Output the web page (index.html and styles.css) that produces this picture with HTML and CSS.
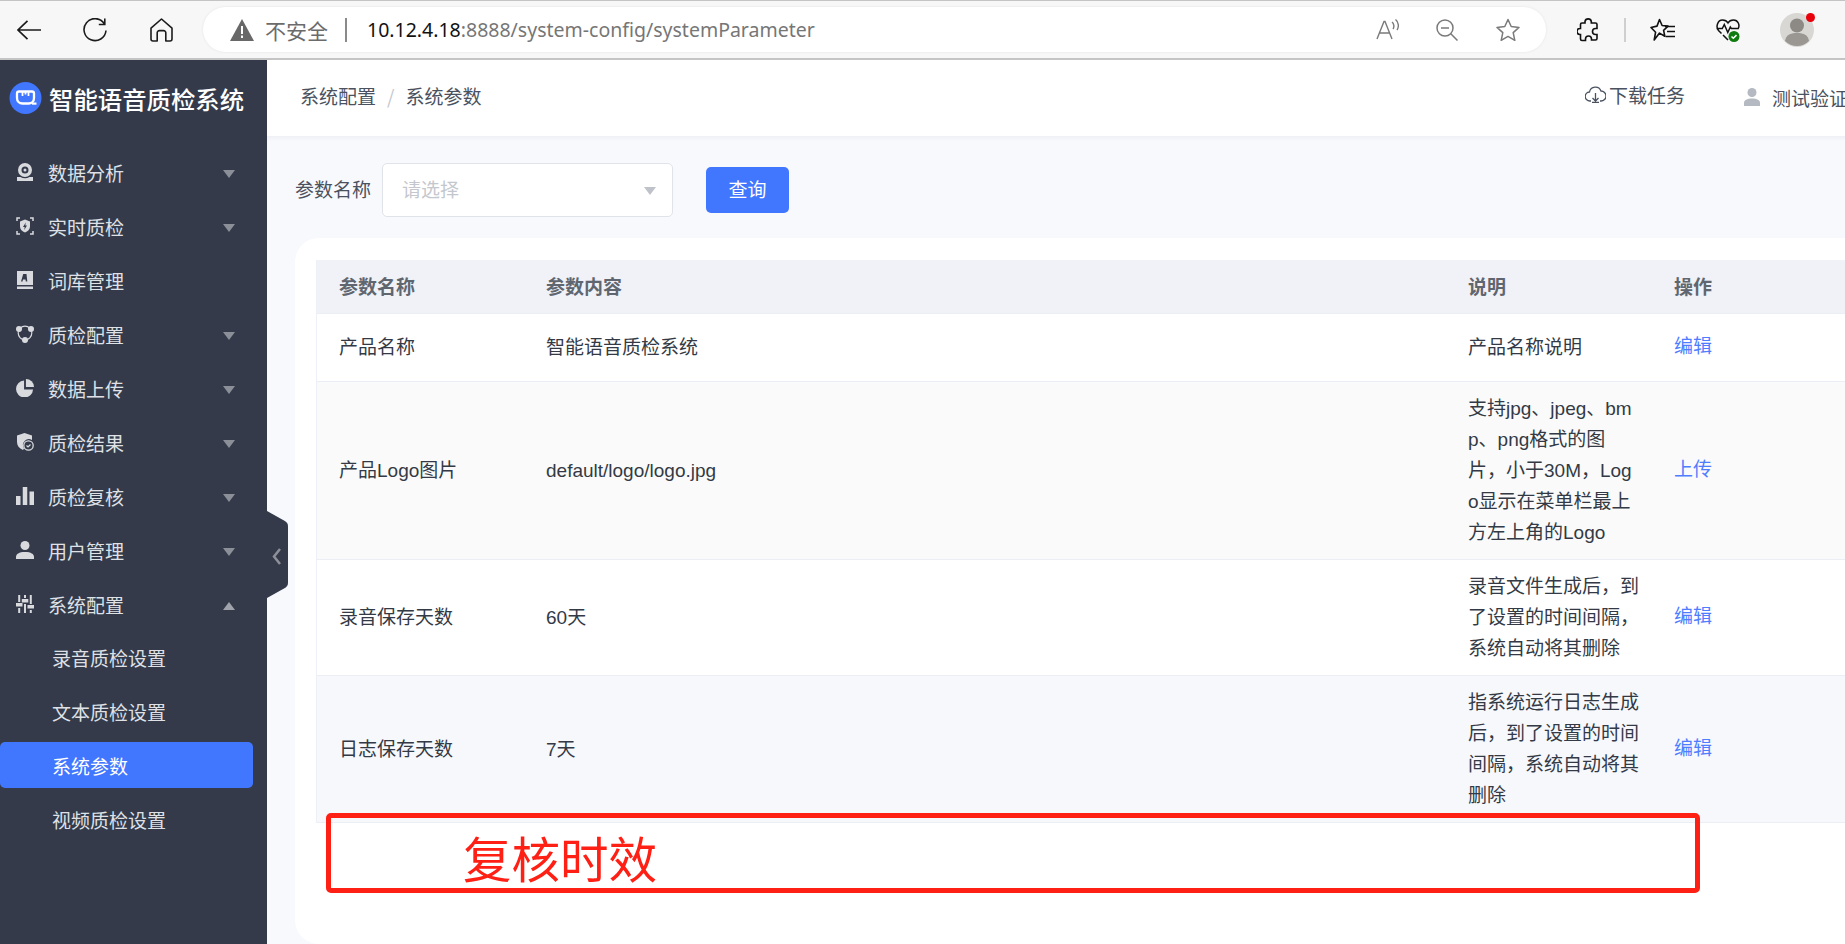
FILE: index.html
```html
<!DOCTYPE html>
<html lang="zh-CN">
<head>
<meta charset="utf-8">
<title>系统参数</title>
<link rel="stylesheet" href="styles.css">
</head>
<body>
<header class="browser">
  <svg class="b-back" width="24" height="20" viewBox="0 0 24 20"><path d="M24 10H1.5M10.5 .8 1 10l9.5 9.2" fill="none" stroke="#1c1c1c" stroke-width="1.7"/></svg>
  <svg class="b-reload" width="24" height="24" viewBox="0 0 24 24"><path d="M21.2 5.5A11 11 0 1 0 23 12.5M21.8 .5v6h-6" fill="none" stroke="#1c1c1c" stroke-width="1.6"/></svg>
  <svg class="b-home" width="23" height="24" viewBox="0 0 23 24"><path d="M1 10.2 11.5 1 22 10.2V21a2 2 0 0 1-2 2h-4.2v-8.2a2.2 2.2 0 0 0-2.2-2.2H9.4a2.2 2.2 0 0 0-2.2 2.2V23H3a2 2 0 0 1-2-2z" fill="none" stroke="#1c1c1c" stroke-width="1.6" stroke-linejoin="round"/></svg>
  <div class="pill">
    <svg class="warn" width="24" height="22" viewBox="0 0 24 22"><path d="M12 0 24 22H0z" fill="#686868"/><path d="M11 7h2v8h-2zM11 16.500h2v2.500h-2z" fill="#fff"/></svg>
    <span class="insecure">不安全</span>
    <span class="url-sep"></span>
    <span class="url"><b>10.12.4.18</b>:8888/system-config/systemParameter</span>
    <svg class="p-read" width="24" height="21" viewBox="0 0 24 21"><path d="M1 20 8 2.500h1L16 20M3.500 14h10M16 3c2 1.500 2.500 5 1 7M19.500 .5c3.200 2.500 3.700 7.500 1.500 10.500" fill="none" stroke="#7a7a7a" stroke-width="1.400"/></svg>
    <svg class="p-zoom" width="22" height="22" viewBox="0 0 22 22"><circle cx="9" cy="9" r="8" fill="none" stroke="#7a7a7a" stroke-width="1.500"/><path d="M5 9h8M14.800 14.800 21.500 21.500" fill="none" stroke="#7a7a7a" stroke-width="1.500"/></svg>
    <svg class="p-star" width="24" height="24" viewBox="0 0 24 24"><path d="m12 1.500 3.200 7 7.800.9-5.800 5.200 1.600 7.700L12 18.400l-6.800 3.900 1.600-7.700L1 9.400l7.800-.9z" fill="none" stroke="#7a7a7a" stroke-width="1.500" stroke-linejoin="round"/></svg>
  </div>
  <svg class="b-puzzle" width="22" height="24" viewBox="0 0 22 24"><path d="M8 3.500a3.200 3.200 0 0 1 6.300 0V5h4.200a1.500 1.500 0 0 1 1.500 1.500v4h-1.500a3 3 0 0 0 0 6H20v4a1.500 1.500 0 0 1-1.500 1.500h-4V21a3 3 0 0 0-6 0v1.500H5A1.500 1.500 0 0 1 3.500 21v-4.500H3a3 3 0 0 1 0-6h.5v-4A1.500 1.500 0 0 1 5 5h3z" fill="none" stroke="#111" stroke-width="1.600"/></svg>
  <span class="b-sep"></span>
  <svg class="b-fav" width="25" height="24" viewBox="0 0 25 24"><path d="m9.500 1.500 2.600 6 5.900.600-4.400 4.200 1.200 5.900-5.300-3.100L4.200 22l1.400-7.800L1 9.500l6-1.400z" fill="none" stroke="#111" stroke-width="1.600" stroke-linejoin="round"/><path d="M15 8.500h10M17 13.500h8M15.500 18.500h9.500" fill="none" stroke="#111" stroke-width="1.600"/></svg>
  <span class="b-heart">
    <svg width="24" height="24" viewBox="0 0 24 24"><path d="M5.500 15.500 2.500 12.500C-.5 9 1.500 2 6.500 2 9 2 11 3.200 12 5c1-1.800 3-3 5.500-3 4.500 0 6.800 5 4.500 9M.5 10.500h5.800l2-4 3.500 8 2.500-5.500 1 1.500h7.200M7 17l5 5" fill="none" stroke="#111" stroke-width="1.500"/><circle cx="18" cy="18.500" r="5.500" fill="#107c10"/><path d="m15.500 18.500 1.800 1.800 3.200-3.200" fill="none" stroke="#fff" stroke-width="1.500"/></svg>
  </span>
  <span class="avatar">
    <svg width="34" height="34" viewBox="0 0 34 34"><circle cx="17" cy="17" r="17" fill="#d8d7d4"/><circle cx="17" cy="12.500" r="7" fill="#8d8984"/><path d="M5 28c1-6 5-8 12-8s11 2 12 8a17 17 0 0 1-24 0z" fill="#9a9691"/></svg>
    <i class="dot"></i>
  </span>
</header>

<div class="app">
  <aside class="sidebar">
    <div class="logo">
      <svg width="33" height="32" viewBox="0 0 33 32"><circle cx="16.500" cy="16" r="16" fill="#4176ff"/><path d="M8 11.500c0-1.200.8-2 2-2h13c1.200 0 2 .8 2 2v4.500c0 3.300-2.200 5.500-5.500 5.500h-6c-3.300 0-5.500-2.200-5.500-5.500z" fill="none" stroke="#fff" stroke-width="2.300"/><path d="M13.500 10v4M19.500 10v4M16.500 10v2.500" stroke="#fff" stroke-width="1.800"/><path d="M23 20.500h4.500v2.200H23z" fill="#fff"/></svg>
      <span>智能语音质检系统</span>
    </div>
    <nav class="menu">
      <a class="item"><svg class="ico" viewBox="0 0 18 18"><path fill-rule="evenodd" d="M9 0a7 7 0 1 1 0 14A7 7 0 0 1 9 0zm0 3.500a3.500 3.500 0 1 0 0 7 3.500 3.500 0 0 0 0-7z"/><circle cx="9" cy="7" r="1.500"/><path d="M1 14h3.500c1.300.8 2.800 1.200 4.500 1.200s3.200-.4 4.500-1.200H17v4H1z"/></svg><span>数据分析</span><i class="caret"></i></a>
      <a class="item"><svg class="ico" viewBox="0 0 18 18"><path d="M4 1H1v3M14 1h3v3M4 17H1v-3M14 17h3v-3" fill="none" stroke="#d8dade" stroke-width="1.500"/><path fill-rule="evenodd" d="M9 2.500 14 4.500v5c0 3-2.200 5-5 6-2.800-1-5-3-5-6v-5zM9.800 5.500 7 10h1.700l-.5 3L11 8.500H9.300z"/></svg><span>实时质检</span><i class="caret"></i></a>
      <a class="item"><svg class="ico" viewBox="0 0 18 18"><path fill-rule="evenodd" d="M1 0h16v14H1zm6.200 3L5 10.500h1.500l.5-2h2.500l.3 2h1.500L10.500 3zM1 15.500h16V18H1z"/></svg><span>词库管理</span></a>
      <a class="item"><svg class="ico" viewBox="0 0 18 18"><circle cx="9" cy="8" r="6.800" fill="none" stroke="#d8dade" stroke-width="1.200"/><circle cx="3" cy="4" r="3"/><circle cx="15" cy="4" r="3"/><circle cx="9" cy="15" r="3"/></svg><span>质检配置</span><i class="caret"></i></a>
      <a class="item"><svg class="ico" viewBox="0 0 19 19"><path d="M8.500 1.500v9.500h9.500a9 9 0 1 1-9.500-9.500z"/><path d="M10.500 0a8.500 8.500 0 0 1 8.500 8.500h-8.500z"/></svg><span>数据上传</span><i class="caret"></i></a>
      <a class="item"><svg class="ico" viewBox="0 0 18 18"><path d="M8.500 0 16 2.500V7a6 6 0 0 0-8 8.500 9 9 0 0 1-1 1.500C3 15.500 1 12.500 1 9V2.500z"/><circle cx="12.500" cy="12.500" r="4.700" fill="none" stroke="#d8dade" stroke-width="1.300"/><path d="m10.500 12.500 1.500 1.500 2.500-2.500" fill="none" stroke="#d8dade" stroke-width="1.200"/></svg><span>质检结果</span><i class="caret"></i></a>
      <a class="item"><svg class="ico" viewBox="0 0 20 20"><path d="M0 10h5v10H0zM7.500 0h5v20h-5zM15 5h5v15h-5z"/></svg><span>质检复核</span><i class="caret"></i></a>
      <a class="item"><svg class="ico" viewBox="0 0 18 18"><circle cx="9" cy="4.500" r="4.500"/><path d="M0 18v-2c0-3 3-5 9-5s9 2 9 5v2z"/></svg><span>用户管理</span><i class="caret"></i></a>
      <a class="item"><svg class="ico" viewBox="0 0 18 18"><path d="M2.200 0h2v7h-2zM8 0h2v3H8zM13.800 0h2v9h-2zM2.200 13h2v5h-2zM8 9h2v9H8zM13.800 15h2v3h-2zM0 8h6.500v3.500H0zM5.800 4h6.500v3.500H5.800zM11.500 10H18v3.500h-6.500z"/></svg><span>系统配置</span><i class="caret up"></i></a>
      <div class="sub">
        <a class="sub-item">录音质检设置</a>
        <a class="sub-item">文本质检设置</a>
        <a class="sub-item active">系统参数</a>
        <a class="sub-item">视频质检设置</a>
      </div>
    </nav>
    <svg class="handle" width="21" height="87" viewBox="0 0 21 87"><path d="M0 0 17 9.500c3 1.700 4 3 4 6v56c0 3-1 4.300-4 6L0 87z" fill="#343a4a"/><path d="M13 38 7 45.500l6 7.500" fill="none" stroke="#8d9099" stroke-width="2.500"/></svg>
  </aside>

  <main class="main">
    <div class="topbar">
      <div class="crumbs"><span>系统配置</span><i>/</i><span>系统参数</span></div>
      <div class="top-right">
        <span class="dl">
          <svg width="21" height="17" viewBox="0 0 21 17"><path d="M6 15H5a4.500 4.500 0 0 1-.5-9A6 6 0 0 1 16 5a5 5 0 0 1 0 10h-1" fill="none" stroke="#4a5260" stroke-width="1.300"/><path d="M10.500 7v8M7.500 12l3 3 3-3M7 16.300h7" fill="none" stroke="#4a5260" stroke-width="1.300"/></svg>
          下载任务
        </span>
        <span class="user">
          <svg width="16" height="18" viewBox="0 0 16 18"><circle cx="8" cy="4.500" r="4.500" fill="#b4b9c2"/><path d="M0 18v-3c0-3 3-4.500 8-4.500s8 1.500 8 4.500v3z" fill="#b4b9c2"/></svg>
          测试验证
        </span>
      </div>
    </div>
    <form class="query">
      <label>参数名称</label>
      <div class="select"><span>请选择</span><i></i></div>
      <button type="button"><span>查询</span></button>
    </form>
    <section class="card">
      <table class="grid">
        <colgroup><col class="c1"><col class="c2"><col class="c3"><col class="c4"></colgroup>
        <thead><tr><th>参数名称</th><th>参数内容</th><th>说明</th><th>操作</th></tr></thead>
        <tbody>
          <tr class="r1"><td>产品名称</td><td>智能语音质检系统</td><td class="desc">产品名称说明</td><td><a>编辑</a></td></tr>
          <tr class="r2"><td>产品Logo图片</td><td>default/logo/logo.jpg</td><td class="desc">支持jpg、jpeg、bmp、png格式的图片，小于30M，Logo显示在菜单栏最上方左上角的Logo</td><td><a>上传</a></td></tr>
          <tr><td>录音保存天数</td><td>60天</td><td class="desc">录音文件生成后，到了设置的时间间隔，系统自动将其删除</td><td><a>编辑</a></td></tr>
          <tr class="r4"><td>日志保存天数</td><td>7天</td><td class="desc">指系统运行日志生成后，到了设置的时间间隔，系统自动将其删除</td><td><a>编辑</a></td></tr>
        </tbody>
      </table>
    </section>
  </main>
</div>
<div class="note">复核时效</div>
</body>
</html>
```

FILE: styles.css
```css
* { box-sizing: border-box; }
html, body { margin: 0; height: 944px; overflow: hidden; }
body {
  position: relative;
  font-family: "Liberation Sans", "Noto Sans CJK SC", sans-serif;
  font-size: 19px;
  color: #333a45;
  background: #f8f9fd;
}
a { text-decoration: none; }

/* browser chrome */
.browser {
  height: 60px;
  display: flex;
  align-items: center;
  padding-left: 17px;
  background: #f7f7f7;
  border-top: 1px solid #c4c4c4;
  border-bottom: 2px solid #c4c4c4;
}
.browser svg { flex: none; display: block; }
.b-reload { margin-left: 42px; }
.b-home { margin-left: 43px; }
.pill {
  margin-left: 30px;
  width: 1343px;
  height: 45px;
  display: flex;
  align-items: center;
  padding-left: 27px;
  background: #fff;
  border-radius: 23px;
  box-shadow: 0 0 3px rgba(0,0,0,.08);
}
.insecure { margin-left: 11px; font-family: "Noto Sans CJK SC", sans-serif; font-size: 21px; color: #6b6b6b; }
.url-sep { width: 2px; height: 24px; margin-left: 17px; background: #8a8a8a; }
.url { margin-left: 20px; font-family: "Noto Sans", sans-serif; font-size: 19.500px; color: #767676; flex: 1; white-space: nowrap; }
.url b { font-weight: 400; color: #111; }
.p-read { margin-right: 36px; }
.p-zoom { margin-right: 38px; }
.p-star { margin-right: 26px; }
.b-puzzle { margin-left: 31px; }
.b-sep { width: 2px; height: 24px; margin-left: 25px; background: #cfcfcf; }
.b-fav { margin-left: 24px; }
.b-heart { margin-left: 41px; }
.avatar { position: relative; margin-left: 40px; width: 34px; height: 34px; }
.dot { position: absolute; top: 0; right: -1px; width: 9px; height: 9px; border-radius: 50%; background: #e8000b; }

/* app */
.app { display: flex; height: 884px; }
.sidebar {
  position: relative;
  flex: none;
  width: 267px;
  background: #343a4a;
}
.logo {
  height: 85px;
  display: flex;
  align-items: center;
  padding: 0 0 9px 9px;
  gap: 7px;
  color: #fff;
  font-family: "Noto Sans CJK SC", sans-serif;
  font-size: 24.400px;
  font-weight: 500;
  white-space: nowrap;
}
.item {
  height: 54px;
  display: flex;
  align-items: center;
  padding: 0 32px 0 16px;
  color: #dfe1e6;
  font-family: "Noto Sans CJK SC", sans-serif;
}
.ico { flex: none; width: 18px; height: 18px; margin-right: 14px; fill: #d8dade; }
.caret { margin-left: auto; margin-top: 3px; width: 0; height: 0; border-left: 6.500px solid transparent; border-right: 6.500px solid transparent; border-top: 8px solid #8b8f98; }
.caret.up { border-top: 0; border-bottom: 8px solid #a0a3ab; }
.sub { display: flex; flex-direction: column; margin-top: -1px; }
.sub-item {
  display: flex;
  align-items: center;
  height: 46px;
  margin: 4.050px 14px 4.050px 0;
  padding-left: 52px;
  border-radius: 5px;
  color: #dfe1e6;
  font-family: "Noto Sans CJK SC", sans-serif;
}
.sub-item.active { background: #4176ff; color: #fff; }
.handle { position: absolute; left: 100%; top: 451px; }

/* main */
.main { flex: 1; min-width: 0; display: flex; flex-direction: column; overflow: hidden; }
.topbar {
  flex: none;
  width: 1601px;
  height: 76px;
  display: flex;
  align-items: center;
  justify-content: space-between;
  padding: 0 20px 5px 33px;
  background: #fff;
  box-shadow: 0 2px 4px rgba(60,70,110,.06);
  font-family: "Noto Sans CJK SC", sans-serif;
}
.crumbs { display: flex; align-items: center; color: #4a5260; }
.crumbs i { margin: 0 11px; font-style: normal; color: #c4c8d0; }
.top-right { display: flex; align-items: center; }
.dl { display: flex; align-items: center; gap: 3px; margin-top: -2px; color: #4a5260; }
.user { display: flex; align-items: center; gap: 12px; margin-left: 59px; margin-top: 3px; color: #4a5260; }
.query {
  flex: none;
  display: flex;
  align-items: center;
  padding: 27px 0 21px 28px;
  font-family: "Noto Sans CJK SC", sans-serif;
}
.query label { color: #4a5260; width: 87px; white-space: nowrap; padding-bottom: 3px; }
.select {
  position: relative;
  width: 291px;
  height: 54px;
  display: flex;
  align-items: center;
  padding: 0 0 3px 19px;
  background: #fff;
  border: 1px solid #e0e3ea;
  border-radius: 5px;
  color: #c4c7ce;
}
.select i { position: absolute; right: 16px; top: 23px; border-left: 6.500px solid transparent; border-right: 6.500px solid transparent; border-top: 8px solid #bfc2c9; }
.query button {
  margin-left: 33px;
  width: 83px;
  height: 46px;
  padding: 0 0 4px;
  border: 0;
  border-radius: 5px;
  background: #4176ff;
  color: #fff;
  font: inherit;
}
.card {
  flex: 1;
  width: 1600px;
  margin-left: 28px;
  padding: 22px 0 0 21px;
  background: #fff;
  border-radius: 24px;
}
.grid {
  width: 1560px;
  table-layout: fixed;
  border-collapse: separate;
  border-spacing: 0;
  border-left: 1px solid #edf0f6;
  font-family: "Liberation Sans", "Noto Sans CJK SC", sans-serif;
  line-height: 31px;
}
.c1 { width: 207px; }
.c2 { width: 922px; }
.c3 { width: 206px; }
.grid th {
  height: 54px;
  padding: 0 10px 2px 22px;
  text-align: left;
  background: #f0f2f7;
  color: #60666f;
  font-weight: 700;
  font-family: "Noto Sans CJK SC", sans-serif;
  border-bottom: 1px solid #ebeef5;
}
.grid td {
  padding: 11px 12px 11px 22px;
  border-bottom: 1px solid #ebeef5;
  word-break: break-all;
  vertical-align: middle;
}
.r1 td { height: 68px; }
.r2 td { background: #fafafa; }
.r4 td { background: #f6f8fc; }
.grid a { color: #4f7dff; position: relative; top: -1px; }

/* hand-drawn annotation lying over the screenshot */
.note {
  position: absolute;
  left: 326px;
  top: 813px;
  width: 1374px;
  height: 80px;
  display: flex;
  align-items: center;
  padding: 8px 0 0 132px;
  border: 5px solid #ff2015;
  border-radius: 5px;
  color: #ff2015;
  font-family: "Noto Sans CJK SC", sans-serif;
  font-size: 48.500px;
  line-height: 1;
}
```
